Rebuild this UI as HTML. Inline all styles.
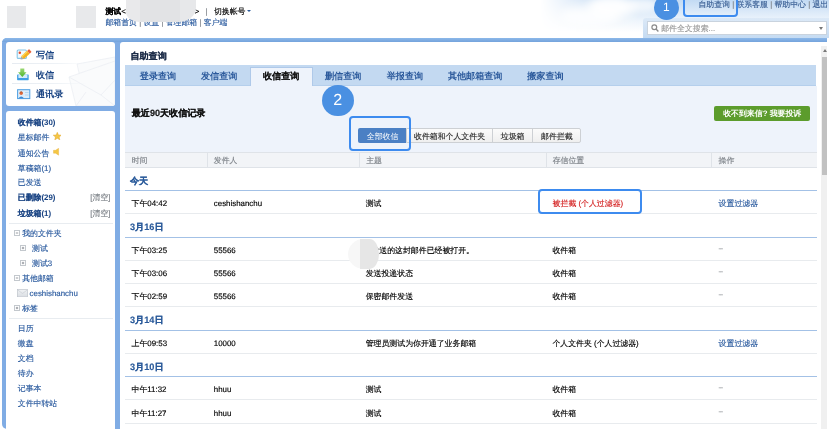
<!DOCTYPE html>
<html><head><meta charset="utf-8">
<style>
*{margin:0;padding:0;box-sizing:border-box}
html,body{width:829px;height:439px;overflow:hidden;background:#fff;font-family:"Liberation Sans",sans-serif;}
body{will-change:transform;-webkit-font-smoothing:antialiased;text-rendering:geometricPrecision}
.a{position:absolute;white-space:nowrap}
.t8{font-size:7.9px;line-height:10px;-webkit-text-stroke:0.15px currentColor}
.t9{font-size:9.1px;line-height:10px;-webkit-text-stroke:0.15px currentColor}
.b{font-weight:bold}
.t8.b{-webkit-text-stroke:0.05px currentColor}
.lk{color:#2b5b9f}
.nv{color:#1b4584}
.gr{color:#7d8288}
.blk{color:#000}
</style></head><body>

<!-- header left -->
<div class="a" style="left:6.6px;top:5.6px;width:19.5px;height:22.5px;background:#e8e9eb"></div>
<div class="a" style="left:75.9px;top:5.6px;width:19.9px;height:22.5px;background:#e8e9eb"></div>
<div class="a t8 blk" style="left:105.4px;top:7.0px"><b>测试</b>&lt;</div>

<div class="a t8 blk" style="left:192.5px;top:7.0px">.&gt;</div>
<div class="a t8 gr" style="left:205.5px;top:7.0px">|</div>
<div class="a t8 blk" style="left:213.9px;top:7.0px">切换帐号</div>
<div class="a" style="left:247px;top:10.0px;width:0;height:0;border-left:2.2px solid transparent;border-right:2.2px solid transparent;border-top:2.6px solid #2b5a9a"></div>
<div class="a t8 lk" style="left:105.4px;top:18.0px">邮箱首页 <span class="gr">|</span> 设置 <span class="gr">|</span> 管理邮箱 <span class="gr">|</span> 客户端</div>
<div class="a" style="left:125.6px;top:-10px;width:70.4px;height:31.8px;background:linear-gradient(90deg,#e9e9eb 0,#e9e9eb 20%,#e2e3e5 20%,#e2e3e5 77%,#e7e8ea 77%);border-radius:0 0 18px 13px/0 0 14px 10px"></div>

<!-- header right sky -->
<div class="a" style="left:540px;top:0;width:289px;height:38px;background:linear-gradient(180deg,#c2daf3 0%,#d9e8f8 28%,#eef5fc 55%,#ffffff 85%);-webkit-mask-image:linear-gradient(90deg,transparent 0,rgba(0,0,0,.6) 15%,#000 35%);"></div>
<div class="a" style="left:588px;top:-4px;width:48px;height:22px;border-radius:50%;background:rgba(255,255,255,0.95);filter:blur(4px)"></div>
<div class="a" style="left:560px;top:6px;width:60px;height:20px;border-radius:50%;background:rgba(255,255,255,0.8);filter:blur(5px)"></div>
<div class="a" style="left:628px;top:-2px;width:30px;height:14px;border-radius:50%;background:rgba(255,255,255,0.7);filter:blur(3px)"></div>
<div class="a t8" style="left:698.4px;top:-0.3px;color:#3a5f94">自助查询 <span class="gr">|</span> 联系客服 <span class="gr">|</span> 帮助中心 <span class="gr">|</span> 退出</div>



<div class="a" style="left:642.7px;top:17.9px;width:186.3px;height:20.1px;background:linear-gradient(180deg,#dce9f7,#c5dbf2);border-radius:3px 0 0 0"></div>
<div class="a" style="left:647.3px;top:21.2px;width:179.4px;height:14px;background:#fff;border:1px solid #c9d3de"></div>
<svg class="a" style="left:651px;top:24.3px" width="8" height="8" viewBox="0 0 8 8"><circle cx="3.3" cy="3.3" r="2.4" fill="none" stroke="#8a8a8a" stroke-width="1.2"/><line x1="5" y1="5" x2="7.4" y2="7.4" stroke="#8a8a8a" stroke-width="1.4"/></svg>
<div class="a t8" style="left:661.2px;top:24.3px;color:#9a9a9a">邮件全文搜索...</div>
<div class="a" style="left:819px;top:27.0px;width:0;height:0;border-left:2.5px solid transparent;border-right:2.5px solid transparent;border-top:3px solid #777"></div>

<div class="a" style="left:653.9px;top:-5.1px;width:25px;height:25px;border-radius:50%;background:#4a90e2;color:#fff;font-size:12px;line-height:25px;text-align:center">1</div>
<div class="a" style="left:683.1px;top:-8px;width:54.8px;height:24.6px;border:2px solid #3d8bef;border-radius:4px"></div>
<!-- frame -->
<div class="a" style="left:2px;top:37.9px;width:825px;height:390.9px;background:#80ace4;border-radius:5px 0 0 5px;overflow:hidden"><div style="position:absolute;left:0;top:0;width:100%;height:4.1px;background:linear-gradient(#8cb8e9,#74a3dc)"></div>
</div>
<!-- left panel 1 -->
<div class="a" style="left:6.15px;top:42.0px;width:109px;height:63.9px;background:#fff;border-radius:3px;overflow:hidden">
  <svg class="a" style="left:0;top:0" width="109" height="64" viewBox="0 0 109 64">
    <g stroke="#e9edf2" stroke-width="0.7" fill="#fafbfc">
      <path d="M71 22 L109 15 L109 40 L76 44 Z"/>
      <path d="M63 35 L109 19 L109 64 L70 64 Z"/>
      <path d="M63 35 L95 53 L109 38" fill="none"/>
      <path d="M95 53 L109 64 M70 64 L80 50" fill="none"/>
    </g>
  </svg>
</div>
<!-- left panel 2 -->
<div class="a" style="left:6.15px;top:110.7px;width:109px;height:318.1px;background:#fff;border-radius:3px 3px 0 0"></div>
<!-- content panel -->
<div class="a" style="left:119.8px;top:42.0px;width:707.2px;height:386.8px;background:#fff;border-radius:3px 0 0 0"></div>

<!-- left panel 1 items -->
<svg class="a" style="left:14px;top:46px" width="20" height="16" viewBox="0 0 20 16">
  <rect x="3.2" y="4" width="9.2" height="8.4" rx="1" fill="#f2f9fd" stroke="#86c6e8" stroke-width="1.1"/>
  <circle cx="5.8" cy="6.7" r="1.25" fill="#e84c2a"/>
  <g transform="translate(6.6,13.4) rotate(-42.5)">
    <path d="M0 0 L2.6 -1.9 L2.6 1.9 Z" fill="#a9a9a9"/>
    <rect x="2.6" y="-1.9" width="8" height="3.8" fill="#f6b21e"/>
    <rect x="2.6" y="-1.9" width="8" height="1.3" fill="#fbd45a"/>
    <rect x="10.6" y="-1.9" width="2.6" height="3.8" rx="0.6" fill="#e8643c"/>
  </g>
</svg>
<div class="a t9 b nv" style="left:36px;top:49.5px;-webkit-text-stroke:0">写信</div>
<div class="a" style="left:12px;top:63.4px;width:75px;height:1px;background:linear-gradient(90deg,#e6ebf1,#eef2f6 60%,rgba(255,255,255,0))"></div>
<svg class="a" style="left:14px;top:66px" width="20" height="16" viewBox="0 0 20 16">
  <defs><linearGradient id="ga" x1="0" y1="0" x2="0" y2="1"><stop offset="0" stop-color="#9ad873"/><stop offset="1" stop-color="#4fb52e"/></linearGradient></defs>
  <rect x="3.1" y="8.4" width="11.6" height="5.8" rx="0.6" fill="#3f9fe4"/>
  <rect x="4.4" y="8.4" width="9" height="3.6" fill="#d3ebfa"/>
  <path d="M6.3 2.6 L10.3 2.6 L10.3 6.2 L12.5 6.2 L8.3 10.9 L4.1 6.2 L6.3 6.2 Z" fill="url(#ga)"/>
</svg>
<div class="a t9 b nv" style="left:36px;top:69.5px;-webkit-text-stroke:0">收信</div>
<div class="a" style="left:12px;top:83.0px;width:75px;height:1px;background:linear-gradient(90deg,#e6ebf1,#eef2f6 60%,rgba(255,255,255,0))"></div>
<svg class="a" style="left:14px;top:86px" width="20" height="16" viewBox="0 0 20 16">
  <rect x="3.6" y="3.7" width="12.2" height="8.9" fill="#dcedfa" stroke="#4d9ee2" stroke-width="1"/>
  <path d="M4.4 12.2 Q7.2 8.6 10 12.2 Z" fill="#3b8ad6"/>
  <circle cx="7.2" cy="7.2" r="1.7" fill="#e0683a"/>
  <path d="M5.4 6.6 Q7.2 4.4 9 6.6 Q7.2 5.8 5.4 6.6 Z" fill="#9a4a22"/>
  <rect x="11" y="6" width="3.6" height="0.8" fill="#a9d1f1"/><rect x="11" y="8.6" width="3.6" height="0.8" fill="#a9d1f1"/>
</svg>
<div class="a t9 b nv" style="left:36px;top:89.0px;-webkit-text-stroke:0">通讯录</div>

<!-- left panel 2 items -->
<div class="a t8 b nv" style="left:17.8px;top:118.3px">收件箱(30)</div>
<div class="a t8 lk" style="left:17.8px;top:133.4px">星标邮件</div>
<svg class="a" style="left:52.5px;top:132.3px" width="8.6" height="8.2" viewBox="0 0 10 9.5"><path d="M5 0.4 L6.3 3.5 L9.7 3.7 L7.1 5.8 L7.9 9.1 L5 7.3 L2.1 9.1 L2.9 5.8 L0.3 3.7 L3.7 3.5 Z" fill="#f5c744" stroke="#e2a52a" stroke-width="0.6" stroke-linejoin="round"/></svg>
<div class="a t8 lk" style="left:17.8px;top:148.8px">通知公告</div>
<svg class="a" style="left:53px;top:148px" width="7" height="7.5" viewBox="0 0 7 7.5"><path d="M0.5 2.3 L2.6 2.3 L5.6 0.3 L5.6 7.2 L2.6 5.2 L0.5 5.2 Z" fill="#f5c744" stroke="#e6ad3a" stroke-width="0.4"/></svg>
<div class="a t8 lk" style="left:17.8px;top:163.6px">草稿箱(1)</div>
<div class="a t8 lk" style="left:17.8px;top:178.4px">已发送</div>
<div class="a t8 b nv" style="left:17.8px;top:193.2px">已删除(29)</div>
<div class="a t8 gr" style="left:90.3px;top:193.2px">[清空]</div>
<div class="a t8 b nv" style="left:17.8px;top:208.6px">垃圾箱(1)</div>
<div class="a t8 gr" style="left:90.3px;top:208.6px">[清空]</div>
<div class="a" style="left:9px;top:223.0px;width:103.6px;height:1px;background:#e8ecf0"></div>

<svg class="a" style="left:14px;top:230px" width="6" height="6" viewBox="0 0 6 6"><rect x="0.5" y="0.5" width="5" height="5" fill="#fff" stroke="#c3c8cd" stroke-width="1"/><rect x="1.8" y="2.6" width="2.4" height="0.8" fill="#80868d"/></svg>
<div class="a t8 lk" style="left:22.2px;top:229.1px">我的文件夹</div>
<svg class="a" style="left:20px;top:245px" width="6" height="6" viewBox="0 0 6 6"><rect x="0.5" y="0.5" width="5" height="5" fill="#fff" stroke="#c3c8cd" stroke-width="1"/><rect x="1.8" y="2.6" width="2.4" height="0.8" fill="#80868d"/><rect x="2.6" y="1.8" width="0.8" height="2.4" fill="#80868d"/></svg>
<div class="a t8 lk" style="left:32px;top:243.9px">测试</div>
<svg class="a" style="left:20px;top:260px" width="6" height="6" viewBox="0 0 6 6"><rect x="0.5" y="0.5" width="5" height="5" fill="#fff" stroke="#c3c8cd" stroke-width="1"/><rect x="1.8" y="2.6" width="2.4" height="0.8" fill="#80868d"/><rect x="2.6" y="1.8" width="0.8" height="2.4" fill="#80868d"/></svg>
<div class="a t8 lk" style="left:32px;top:258.7px">测试3</div>
<svg class="a" style="left:14px;top:275px" width="6" height="6" viewBox="0 0 6 6"><rect x="0.5" y="0.5" width="5" height="5" fill="#fff" stroke="#c3c8cd" stroke-width="1"/><rect x="1.8" y="2.6" width="2.4" height="0.8" fill="#80868d"/></svg>
<div class="a t8 lk" style="left:22.2px;top:273.9px">其他邮箱</div>
<svg class="a" style="left:17.2px;top:289px" width="11" height="8.3" viewBox="0 0 11 8.3"><defs><linearGradient id="ge" x1="0" y1="0" x2="0" y2="1"><stop offset="0" stop-color="#f1f3f5"/><stop offset="1" stop-color="#d9dde2"/></linearGradient></defs><rect x="0.3" y="0.3" width="10.4" height="7.7" fill="url(#ge)" stroke="#b8bec6" stroke-width="0.6"/><path d="M0.5 0.8 L5.5 4.5 L10.5 0.8" fill="none" stroke="#c5cad0" stroke-width="0.6"/></svg>
<div class="a t8 lk" style="left:29.6px;top:288.7px">ceshishanchu</div>
<svg class="a" style="left:14px;top:305px" width="6" height="6" viewBox="0 0 6 6"><rect x="0.5" y="0.5" width="5" height="5" fill="#fff" stroke="#c3c8cd" stroke-width="1"/><rect x="1.8" y="2.6" width="2.4" height="0.8" fill="#80868d"/><rect x="2.6" y="1.8" width="0.8" height="2.4" fill="#80868d"/></svg>
<div class="a t8 lk" style="left:22.2px;top:303.8px">标签</div>
<div class="a" style="left:9px;top:317.7px;width:103.6px;height:1px;background:#e8ecf0"></div>
<div class="a t8 lk" style="left:17.8px;top:324.3px">日历</div>
<div class="a t8 lk" style="left:17.8px;top:339.1px">微盘</div>
<div class="a t8 lk" style="left:17.8px;top:353.9px">文档</div>
<div class="a t8 lk" style="left:17.8px;top:369.0px">待办</div>
<div class="a t8 lk" style="left:17.8px;top:383.9px">记事本</div>
<div class="a t8 lk" style="left:17.8px;top:398.7px">文件中转站</div>

<!-- content -->
<div class="a t9 b" style="left:130.4px;top:51.0px;color:#1c2c48">自助查询</div>
<div class="a" style="left:124.7px;top:64.7px;width:691.8px;height:20.9px;background:#c3d9f1;border-bottom:1px solid #b5cfec"></div>
<div class="a" style="left:250.3px;top:67.4px;width:62.3px;height:18.3px;background:#eef3fb;border:1px solid #afc9e9;border-bottom:none"></div>
<div class="a" style="left:124.5px;top:85.6px;width:692px;height:66.5px;background:#eef3fb"></div>
<div class="a t9 b lk" style="left:139.8px;top:71.0px;-webkit-text-stroke:0;color:#2c5a9c">登录查询</div>
<div class="a t9 b lk" style="left:201px;top:71.0px;-webkit-text-stroke:0;color:#2c5a9c">发信查询</div>
<div class="a t9 b" style="left:263px;top:71.0px;color:#111;-webkit-text-stroke:0.05px #111">收信查询</div>
<div class="a t9 b lk" style="left:325px;top:71.0px;-webkit-text-stroke:0;color:#2c5a9c">删信查询</div>
<div class="a t9 b lk" style="left:386.7px;top:71.0px;-webkit-text-stroke:0;color:#2c5a9c">举报查询</div>
<div class="a t9 b lk" style="left:447.9px;top:71.0px;-webkit-text-stroke:0;color:#2c5a9c">其他邮箱查询</div>
<div class="a t9 b lk" style="left:527.2px;top:71.0px;-webkit-text-stroke:0;color:#2c5a9c">搬家查询</div>

<div class="a t9 b" style="left:131.7px;top:107.5px;color:#111">最近90天收信记录</div>
<div class="a" style="left:714px;top:105.6px;width:96.2px;height:15.8px;background:#5c9c2c;border-radius:2px"></div>
<div class="a t8 b" style="left:723.2px;top:108.6px;color:#fff;-webkit-text-stroke:0">收不到来信? 我要投诉</div>

<div class="a" style="left:357.9px;top:128.3px;width:48.1px;height:15px;background:#4b80c4;border-radius:2px 0 0 2px"></div>
<div class="a t8" style="left:366.8px;top:131.6px;color:#fff;-webkit-text-stroke:0">全部收信</div>
<div class="a" style="left:406px;top:128.3px;width:174.5px;height:15px;background:linear-gradient(#fbfbfb,#efefef);border:1px solid #cdd0d4;border-radius:0 2px 2px 0"></div>
<div class="a" style="left:492.4px;top:128.3px;width:1px;height:15px;background:#cdd0d4"></div>
<div class="a" style="left:532.2px;top:128.3px;width:1px;height:15px;background:#cdd0d4"></div>
<div class="a t8" style="left:414px;top:131.8px;color:#2a2a2a">收件箱和个人文件夹</div>
<div class="a t8" style="left:500.8px;top:131.8px;color:#2a2a2a">垃圾箱</div>
<div class="a t8" style="left:541.1px;top:131.8px;color:#2a2a2a">邮件拦截</div>

<!-- table header -->
<div class="a" style="left:124.5px;top:152.0px;width:692px;height:16.1px;background:#f2f4f7;border-top:1px solid #dfe3e8;border-bottom:1px solid #dfe3e8"></div>
<div class="a" style="left:207.0px;top:152.0px;width:1px;height:16px;background:#dfe3e8"></div>
<div class="a" style="left:359.0px;top:152.0px;width:1px;height:16px;background:#dfe3e8"></div>
<div class="a" style="left:545.8px;top:152.0px;width:1px;height:16px;background:#dfe3e8"></div>
<div class="a" style="left:710.6px;top:152.0px;width:1px;height:16px;background:#dfe3e8"></div>
<div class="a t8 gr" style="left:131.7px;top:156.2px">时间</div>
<div class="a t8 gr" style="left:213.8px;top:156.2px">发件人</div>
<div class="a t8 gr" style="left:366.2px;top:156.2px">主题</div>
<div class="a t8 gr" style="left:552.7px;top:156.2px">存信位置</div>
<div class="a t8 gr" style="left:718.6px;top:156.2px">操作</div>

<!-- rows -->
<div id="rows"></div>
<div class="a" style="left:124.5px;top:190.0px;width:692px;height:1px;background:#a3c1e6"></div>
<div class="a t9 b" style="left:129.9px;top:175.5px;color:#2a5a9a;font-size:9.2px">今天</div>
<div class="a t8 blk" style="left:131.5px;top:199.2px">下午04:42</div>
<div class="a t8 blk" style="left:213.8px;top:199.2px">ceshishanchu</div>
<div class="a t8 blk" style="left:365.7px;top:199.2px">测试</div>
<div class="a t8" style="left:552.6px;top:199.2px;color:#d42222">被拦截 (个人过滤器)</div>
<div class="a t8 lk" style="left:718.6px;top:199.2px">设置过滤器</div>
<div class="a" style="left:124.5px;top:213.3px;width:692px;height:1px;background:#e8ebee"></div>

<div class="a t9 b" style="left:129.9px;top:221.8px;color:#2a5a9a;font-size:9.2px">3月16日</div>
<div class="a" style="left:124.5px;top:236.5px;width:692px;height:1px;background:#a3c1e6"></div>
<div class="a t8 blk" style="left:131.5px;top:245.6px">下午03:25</div>
<div class="a t8 blk" style="left:213.8px;top:245.6px">55566</div>
<div class="a t8 blk" style="left:363.5px;top:245.6px">您发送的这封邮件已经被打开。</div>
<div class="a t8 blk" style="left:552.4px;top:245.6px">收件箱</div>
<div class="a t8 gr" style="left:718.6px;top:243.80px;letter-spacing:-0.6px;color:#a0a4a8">--</div>
<div class="a" style="left:124.5px;top:259.8px;width:692px;height:1px;background:#e8ebee"></div>
<div class="a t8 blk" style="left:131.5px;top:268.8px">下午03:06</div>
<div class="a t8 blk" style="left:213.8px;top:268.8px">55566</div>
<div class="a t8 blk" style="left:365.7px;top:268.8px">发送投递状态</div>
<div class="a t8 blk" style="left:552.4px;top:268.8px">收件箱</div>
<div class="a t8 gr" style="left:718.6px;top:267.00px;letter-spacing:-0.6px;color:#a0a4a8">--</div>
<div class="a" style="left:124.5px;top:283.0px;width:692px;height:1px;background:#e8ebee"></div>
<div class="a t8 blk" style="left:131.5px;top:292.1px">下午02:59</div>
<div class="a t8 blk" style="left:213.8px;top:292.1px">55566</div>
<div class="a t8 blk" style="left:365.7px;top:292.1px">保密邮件发送</div>
<div class="a t8 blk" style="left:552.4px;top:292.1px">收件箱</div>
<div class="a t8 gr" style="left:718.6px;top:290.30px;letter-spacing:-0.6px;color:#a0a4a8">--</div>
<div class="a" style="left:124.5px;top:306.3px;width:692px;height:1px;background:#e8ebee"></div>

<div class="a t9 b" style="left:129.9px;top:315.0px;color:#2a5a9a;font-size:9.2px">3月14日</div>
<div class="a" style="left:124.5px;top:329.5px;width:692px;height:1px;background:#a3c1e6"></div>
<div class="a t8 blk" style="left:131.5px;top:338.6px">上午09:53</div>
<div class="a t8 blk" style="left:213.8px;top:338.6px">10000</div>
<div class="a t8 blk" style="left:365.7px;top:338.6px">管理员测试为你开通了业务邮箱</div>
<div class="a t8 blk" style="left:552.4px;top:338.6px">个人文件夹 (个人过滤器)</div>
<div class="a t8 lk" style="left:718.6px;top:338.6px">设置过滤器</div>
<div class="a" style="left:124.5px;top:352.8px;width:692px;height:1px;background:#e8ebee"></div>

<div class="a t9 b" style="left:129.9px;top:361.5px;color:#2a5a9a;font-size:9.2px">3月10日</div>
<div class="a" style="left:124.5px;top:376.1px;width:692px;height:1px;background:#a3c1e6"></div>
<div class="a t8 blk" style="left:131.5px;top:385.2px">中午11:32</div>
<div class="a t8 blk" style="left:213.8px;top:385.2px">hhuu</div>
<div class="a t8 blk" style="left:365.7px;top:385.2px">测试</div>
<div class="a t8 blk" style="left:552.4px;top:385.2px">收件箱</div>
<div class="a t8 gr" style="left:718.6px;top:383.40px;letter-spacing:-0.6px;color:#a0a4a8">--</div>
<div class="a" style="left:124.5px;top:399.4px;width:692px;height:1px;background:#e8ebee"></div>
<div class="a t8 blk" style="left:131.5px;top:408.5px">中午11:27</div>
<div class="a t8 blk" style="left:213.8px;top:408.5px">hhuu</div>
<div class="a t8 blk" style="left:365.7px;top:408.5px">测试</div>
<div class="a t8 blk" style="left:552.4px;top:408.5px">收件箱</div>
<div class="a t8 gr" style="left:718.6px;top:406.70px;letter-spacing:-0.6px;color:#a0a4a8">--</div>
<div class="a" style="left:124.5px;top:422.7px;width:692px;height:1px;background:#e8ebee"></div>

<!-- redaction blob in subject -->
<div class="a" style="left:348px;top:239.2px;width:31.4px;height:30.3px;border-radius:50%;background:#f7f7f7"></div>
<div class="a" style="left:360.2px;top:239.2px;width:19.2px;height:30.3px;border-radius:0 50% 50% 0/0 50% 50% 0;background:#e6e6e6"></div>

<!-- highlight 2 -->
<div class="a" style="left:321.8px;top:84.6px;width:31.9px;height:31.9px;border-radius:50%;background:#4a90e2;color:#fff;font-size:16px;line-height:31.9px;text-align:center">2</div>
<div class="a" style="left:349.2px;top:116.0px;width:62.3px;height:34.5px;border:2px solid #3d8bef;border-radius:4px"></div>
<div class="a" style="left:538.1px;top:189.4px;width:104.1px;height:25px;border:2px solid #3d8bef;border-radius:4px"></div>

<!-- scrollbar -->
<div class="a" style="left:821.1px;top:45.5px;width:6px;height:383.1px;background:#f0f0f0"></div>
<div class="a" style="left:822.5px;top:49.0px;width:0;height:0;border-left:2.5px solid transparent;border-right:2.5px solid transparent;border-bottom:3px solid #777"></div>
<div class="a" style="left:822px;top:56.6px;width:5px;height:118px;background:#c1c1c1"></div>

</body></html>
